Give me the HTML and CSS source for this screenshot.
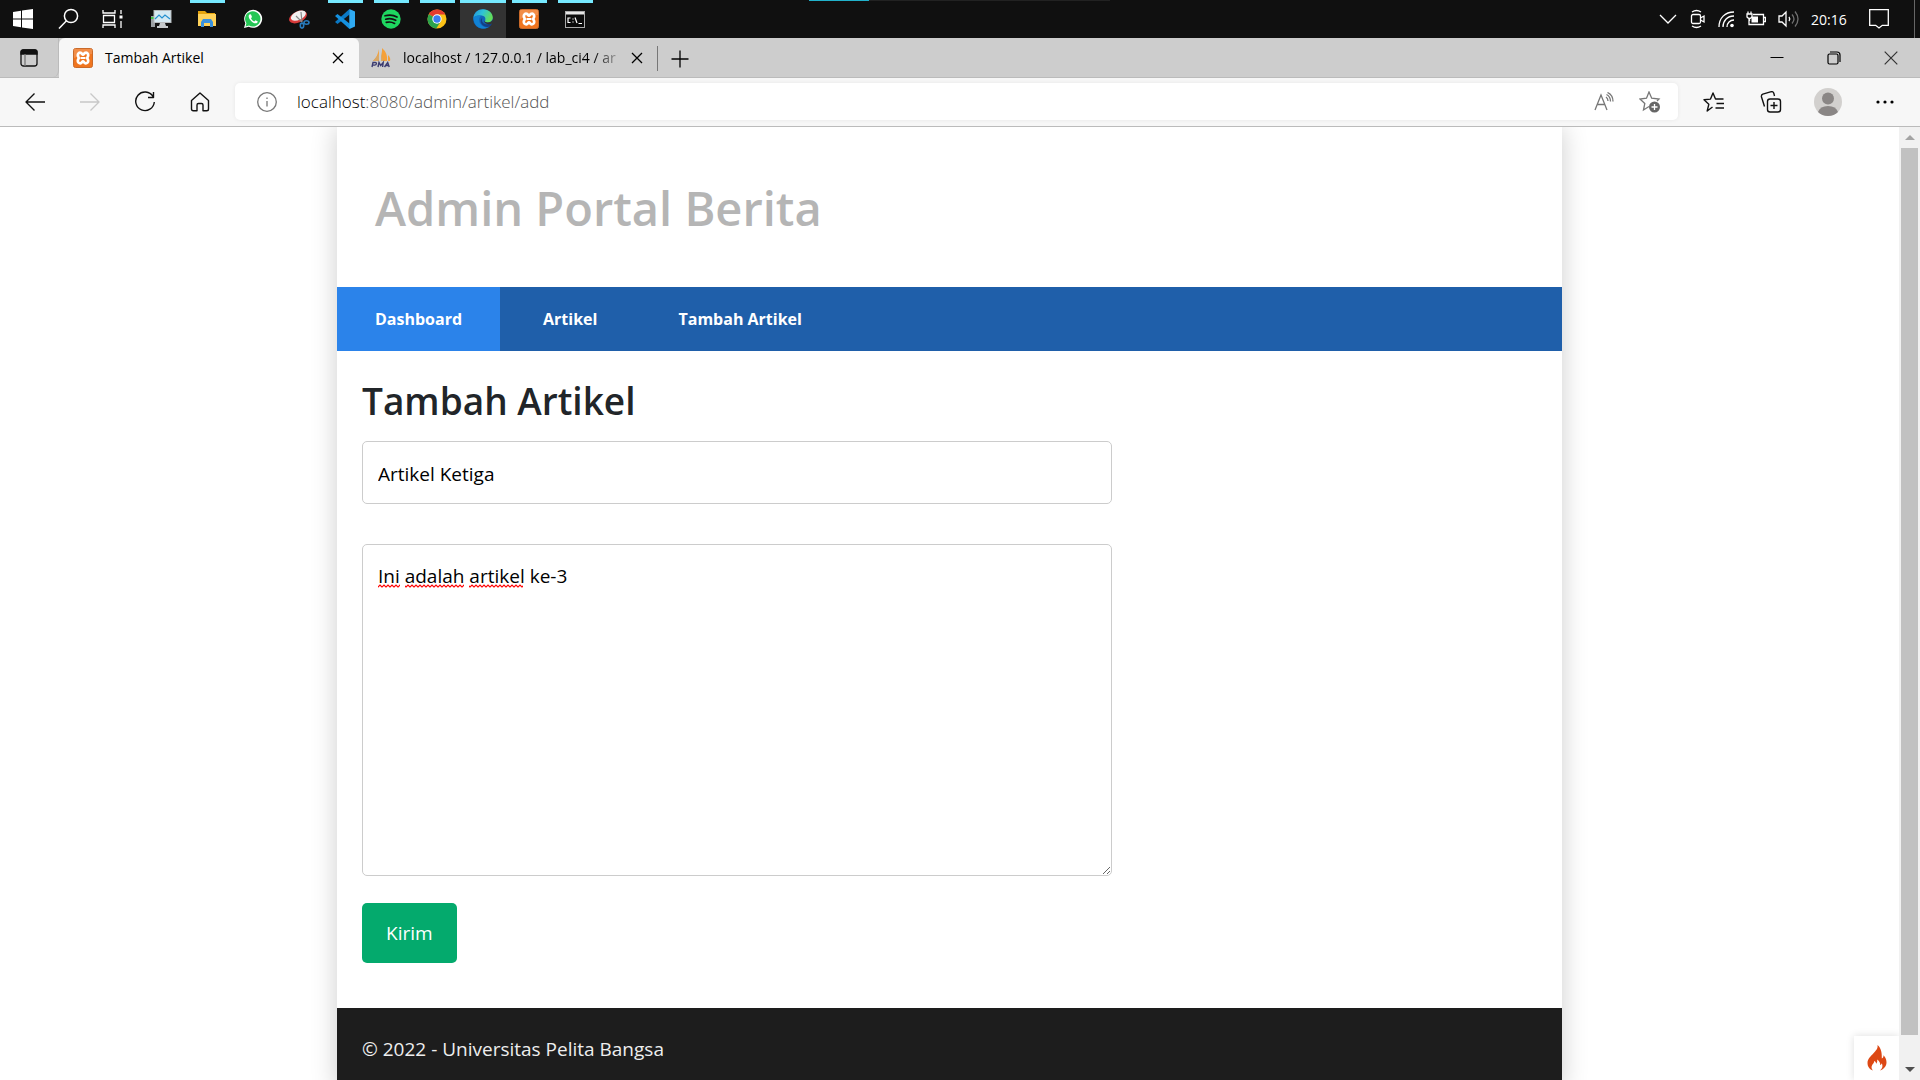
FILE: index.html
```html
<!DOCTYPE html>
<html lang="id">
<head>
<meta charset="utf-8">
<meta name="viewport" content="width=device-width, initial-scale=1">
<title>Tambah Artikel</title>
<link rel="stylesheet" href="styles.css">
</head>
<body>
<svg class="defs" aria-hidden="true">
  <symbol id="xampp" viewBox="0 0 20 20">
    <rect x=".5" y=".5" width="19" height="19" rx="2" fill="#f0751f" stroke="#c96a2a"/>
    <path d="M1 1h18v5Q10 6 1 10z" fill="#fff" opacity=".18"/>
    <path d="M7.300 4.700a2.400 2.400 0 0 0-2.500 2.500c0 1 .6 1.800 1.100 2.800-.5 1-1.100 1.800-1.100 2.800a2.400 2.400 0 0 0 2.500 2.500c1.500 0 1.800-2 2.700-2s1.200 2 2.700 2a2.400 2.400 0 0 0 2.500-2.500c0-1-.6-1.800-1.100-2.800.5-1 1.100-1.800 1.100-2.800a2.400 2.400 0 0 0-2.500-2.500c-1.500 0-1.800 2-2.700 2s-1.200-2-2.700-2z" fill="none" stroke="#fff" stroke-width="2.700" stroke-linejoin="round"/>
    <path d="M7.500 10h5" stroke="#fff" stroke-width="2"/>
  </symbol>
  <symbol id="close" viewBox="0 0 12 12"><path d="M1 1l10 10M11 1L1 11" stroke="currentColor" stroke-width="1.300" fill="none"/></symbol>
</svg>

<header class="taskbar">
  <nav class="apps" aria-label="Taskbar">
    <button class="app" aria-label="Start"><svg width="20" height="20" viewBox="0 0 20 20" fill="#fff"><path d="M0 3l8-1.200v7.700H0zM9 1.600L20 0v9.500H9zM0 10.500h8v7.700L0 17zM9 10.500h11V20L9 18.400z"/></svg></button>
    <button class="app" aria-label="Cari"><svg width="22" height="22" viewBox="0 0 22 22" fill="none" stroke="#fff" stroke-width="1.500"><circle cx="13" cy="8" r="6.600"/><path d="M8.500 12.800L1 20.500"/></svg></button>
    <button class="app" aria-label="Task View"><svg width="26" height="20" viewBox="0 0 26 20" fill="none" stroke="#fff" stroke-width="1.300"><path d="M1 1v3h12V1M1 19v-3h12v3M1.500 6.500h11v7h-11zM19 1v4M19 12v7"/><path d="M17.500 6.500h3v3h-3z" fill="#fff" stroke="none"/></svg></button>
    <button class="app" aria-label="Monitor"><svg width="22" height="18" viewBox="0 0 22 18"><path d="M1 6h4v11H1z" fill="#9a9fa3"/><path d="M1 7h3v2H1z" fill="#45c445"/><rect x="4" y=".5" width="17" height="12" fill="#d5e9f2" stroke="#b5b9bc"/><path d="M5 9l4-4 3 3 3-3 5 4" fill="none" stroke="#2490d0" stroke-width="1.200"/><path d="M10 13h5l1 3h2v2H7v-2h2z" fill="#c5c9cc"/></svg></button>
    <button class="app running" aria-label="File Explorer"><svg width="20" height="18" viewBox="0 0 20 18"><path d="M1 1h7l2 2h8v12H1z" fill="#e5a40e"/><path d="M1 4h18v12H1z" fill="#ffd25a"/><path d="M4 17v-5l2-3h8l2 3v5h-3v-4H7v4z" fill="#3a91dd"/></svg></button>
    <button class="app" aria-label="WhatsApp"><svg width="20" height="20" viewBox="0 0 20 20"><path d="M1 19l1.300-4.800A9 9 0 1 1 5.800 17.700z" fill="#fff"/><path d="M2.600 17.400l.8-3.200A7.700 7.700 0 1 1 6 16.600z" fill="#25c655"/><path d="M7 5.300c-.9.300-1.500 1.300-1.300 2.400.5 3 4 6.400 6.800 6.600 1 0 2.200-.7 2.300-1.900l-2.300-1.200-1.200 1.200c-1.500-.6-2.700-1.800-3.300-3.200L9 8 8 5.500z" fill="#fff"/></svg></button>
    <button class="app" aria-label="Snipping Tool"><svg width="22" height="20" viewBox="0 0 22 20"><ellipse cx="10" cy="8" rx="9.500" ry="5.500" transform="rotate(-25 10 8)" fill="#d73a3a"/><ellipse cx="10.500" cy="6.800" rx="8" ry="4.200" transform="rotate(-25 10 7)" fill="#f1eeee"/><path d="M8 7l6 6M13 3l1 10" stroke="#888" stroke-width="1.200"/><g fill="none" stroke="#287bbd" stroke-width="1.600"><ellipse cx="18.500" cy="13.500" rx="2.500" ry="1.700"/><ellipse cx="14" cy="16.600" rx="1.700" ry="2.500"/></g></svg></button>
    <button class="app running" aria-label="Visual Studio Code"><svg width="20" height="20" viewBox="0 0 20 20"><path d="M14.500 0L20 2.500v15L14.500 20z" fill="#2faaf2"/><path d="M14.500 0l1.300 4.500L2.500 15 0 13z" fill="#0a78c4"/><path d="M14.500 20l1.300-4.500L2.500 5 0 7z" fill="#1590df"/><path d="M14.500 0v20l1.500-3V3z" fill="#2faaf2"/></svg></button>
    <button class="app running" aria-label="Spotify"><svg width="20" height="20" viewBox="0 0 20 20"><circle cx="10" cy="10" r="9.700" fill="#1ed760"/><path d="M4 6.800c4-1.200 8.600-.8 12 1.200M4.700 10.200c3.500-1 7-.6 10 1.100M5.300 13.400c3-.8 5.800-.4 8.300 1" fill="none" stroke="#111" stroke-width="1.700" stroke-linecap="round"/></svg></button>
    <button class="app running" aria-label="Google Chrome"><svg width="20" height="20" viewBox="0 0 20 20"><circle cx="10" cy="10" r="9.500" fill="#fbc116"/><path d="M10 10L1.800 5.200A9.500 9.500 0 0 1 18.300 5.500H10z" fill="#e33b2e"/><path d="M10 10L1.800 5.200A9.500 9.500 0 0 0 9.200 19.500l4.700-7.200z" fill="#2ba24c"/><circle cx="10" cy="10" r="4.700" fill="#fff"/><circle cx="10" cy="10" r="3.700" fill="#3a7df0"/></svg></button>
    <button class="app running current" aria-label="Microsoft Edge"><svg width="20" height="20" viewBox="0 0 20 20"><defs><linearGradient id="eg" x1="0" y1="0" x2="1" y2=".4"><stop offset="0" stop-color="#1f8fe0"/><stop offset=".5" stop-color="#2fc3d6"/><stop offset="1" stop-color="#62de59"/></linearGradient></defs><circle cx="10" cy="10" r="9.800" fill="#1264b8"/><path d="M.3 9C1 3.500 5 .2 10 .2c5.700 0 9.800 3.900 9.800 8.300 0 3-2.300 4.900-5 4.900-2.300 0-3.300-.8-2.600-2 .8-2.600-.7-4.400-3.600-4.800C4.500 6 1.500 7 .3 9z" fill="url(#eg)"/><path d="M8.600 6.600C6 8 5 12 8 15.600c2 2.500 5.300 3.800 8.500 1.800C12 21.500 1.500 20.500.3 9 2 6.500 5.500 5.800 8.600 6.600z" fill="#1182d4"/><path d="M9.300 9c-1.800 4 2.200 8 8.700 5.600l1 .2-2 2.500c-3 1.400-6 .5-8-1.700-2-2.600-1.600-5.500.3-6.600z" fill="#123f86"/><path d="M12.200 11.400c-.7 1.200.3 2 2.600 2 2.200 0 4-1 5-3v3.800c-3.500 1.900-7.500 1-8.600-1.500z" fill="#333"/></svg></button>
    <button class="app running" aria-label="XAMPP"><svg width="20" height="20"><use href="#xampp"/></svg></button>
    <button class="app running" aria-label="Command Prompt"><svg width="20" height="17" viewBox="0 0 20 17"><rect x=".5" y=".5" width="19" height="16" fill="#0a0a0a" stroke="#aaa"/><path d="M1 1h18v2.500H1z" fill="#e5e5e5"/><path d="M5.500 7H3v4.500h2.500M8 7.500v1M8 10.500v1M10 6.500l2 5.500M13.500 12.500h3.500" stroke="#fff" fill="none" stroke-width="1.200"/></svg></button>
  </nav>
  <div class="load"></div>
  <div class="tray">
    <svg width="18" height="20" viewBox="0 0 18 20" class="ln"><path d="M1 6l8 8 8-8"/></svg>
    <svg width="16" height="20" viewBox="0 0 16 20" class="ln"><rect x="2.500" y="5.500" width="9" height="9" rx="1.500"/><path d="M11.500 9l3.500-2v6l-3.500-2M3 3q4.500-3 9 0M3 17q4.500 3 9 0"/></svg>
    <svg width="17" height="18" viewBox="0 0 17 18" class="ln"><path d="M2 17C2 8 8 2 17 2M6 17c0-6 4-11 11-11M10 17c0-4 3-7 7-7"/><circle cx="15" cy="15.500" r="1.800" fill="#fff" stroke="none"/></svg>
    <svg width="20" height="16" viewBox="0 0 20 16" class="ln"><path d="M3 8v5.500h14.500v-10H7M18 6.500h1.500v4H18M1 3h5v3q-2.500 3-5 0zM2 3V.5M5 3V.5M3.500 7v3"/><path d="M5.500 5.500h6.500v6H5.500z" fill="#fff" stroke="none"/></svg>
    <svg width="21" height="18" viewBox="0 0 21 18" class="ln"><path d="M1 6h3l4-4v14l-4-4H1z"/><path d="M11 7q1.500 2 0 4"/><path d="M14 4.500q4 4.500 0 9M17 1.500q6 7.500 0 15" opacity=".4"/></svg>
    <time class="clock">20:16</time>
    <svg width="20" height="20" viewBox="0 0 20 20" class="ln"><path d="M.7.7h18.600v15.600h-6L10 19l-3.300-2.700h-6z"/></svg>
    <span class="desk"></span>
  </div>
</header>

<div class="tabs">
  <button class="tabmenu" aria-label="Tab actions"><svg width="18" height="18" viewBox="0 0 18 18" fill="none" stroke="#111" stroke-width="1.300"><rect x="1" y="1" width="16" height="16" rx="2.500"/><path d="M1 5h16V3q0-2-2-2H3Q1 1 1 3z" fill="#111"/><path d="M5 5v12" stroke="#777"/></svg></button>
  <div class="tab on">
    <svg width="20" height="20"><use href="#xampp"/></svg>
    <span class="tabname">Tambah Artikel</span>
    <button class="x" aria-label="Tutup tab"><svg width="12" height="12"><use href="#close"/></svg></button>
  </div>
  <div class="tab">
    <svg width="20" height="20" viewBox="0 0 20 20"><path d="M8 1v12H2Q7 8 8 1zM11 0q6 5 5 13h-5zM17 7q3 3 2 6h-2z" fill="#f5a13a"/><path d="M2 13h6V6zM10 3v10h2z" fill="#d9a866"/><path d="M1 19l1-4.500h2.200q1.500.1 1.200 1.300-.3 1.300-1.700 1.300H1.800M7 19l1-4.500 1.700 3 2.500-3L11.600 19M13.500 19l3.200-4.500 1.500 4.500M14.700 17.500h3" fill="none" stroke="#3b3b70" stroke-width="1.400"/></svg>
    <span class="tabname fade">localhost / 127.0.0.1 / lab_ci4 / ar</span>
    <button class="x" aria-label="Tutup tab"><svg width="12" height="12"><use href="#close"/></svg></button>
  </div>
  <button class="newtab" aria-label="Tab baru"><svg width="18" height="18" viewBox="0 0 18 18" stroke="#000" stroke-width="1.300"><path d="M9 .5v17M.5 9h17"/></svg></button>
  <div class="wins">
    <button aria-label="Minimize"><svg width="14" height="14" viewBox="0 0 14 14" stroke="#000"><path d="M.5 6.500h13"/></svg></button>
    <button aria-label="Restore"><svg width="14" height="14" viewBox="0 0 14 14" fill="none" stroke="#000" stroke-width="1.200"><rect x="1" y="3" width="10" height="10" rx="1.500"/><path d="M3 1h7q3 0 3 3v7"/></svg></button>
    <button aria-label="Close"><svg width="14" height="14" viewBox="0 0 14 14" stroke="#333" stroke-width="1.200"><path d="M.7.7l12.600 12.600M13.300.7L.7 13.300"/></svg></button>
  </div>
</div>

<div class="toolbar">
  <button class="tool" aria-label="Kembali"><svg width="22" height="20" viewBox="0 0 22 20" class="dk"><path d="M21 10H2M10.500 1.500L2 10l8.500 8.500"/></svg></button>
  <button class="tool off" aria-label="Maju"><svg width="22" height="20" viewBox="0 0 22 20" class="dk"><path d="M1 10h19M11.500 1.500L20 10l-8.500 8.500"/></svg></button>
  <button class="tool" aria-label="Muat ulang"><svg width="22" height="22" viewBox="0 0 22 22" class="dk"><path d="M19 5.500A9.300 9.300 0 1 0 20.300 11M19.500 1v5.500H14"/></svg></button>
  <button class="tool" aria-label="Beranda"><svg width="20" height="20" viewBox="0 0 20 20" class="dk"><path d="M1.500 8.500L10 1l8.500 7.500V17q0 1.800-1.800 1.800H13V13q0-1.500-1.500-1.500h-3Q7 11.500 7 13v5.800H3.300q-1.800 0-1.800-1.800z"/></svg></button>
  <div class="address">
    <svg width="20" height="20" viewBox="0 0 20 20" class="gr"><circle cx="10" cy="10" r="9.300"/><path d="M10 9v5.500M10 5.500V7"/></svg>
    <a class="url" href="#"><b>localhost</b>:8080/admin/artikel/add</a>
    <button class="in" aria-label="Baca nyaring"><svg width="20" height="20" viewBox="0 0 20 20" class="gr"><path d="M1 18L7 3l6 15M3.200 12.500h7.600M12 5q2 1.500 2 4M12.500 2.500q4 2 4 7M13.500.5q5.500 2.500 5.500 9"/></svg></button>
    <button class="in" aria-label="Tambah favorit"><svg width="22" height="22" viewBox="0 0 22 22" class="gr"><path d="M10 15.500L4.500 19l1.300-6.500L1 8l6.500-.8L10 1l2.700 6.200L20 8l-2 2"/><circle cx="15.500" cy="16" r="5.500" fill="#666" stroke="none"/><path d="M15.500 13v6M12.500 16h6" stroke="#fff"/></svg></button>
  </div>
  <div class="actions">
    <button class="tool" aria-label="Favorit"><svg width="22" height="20" viewBox="0 0 22 20" class="dk"><path d="M9.500 15L4.200 19l1.600-6.700L1 7.700l6.500-.6L10 1l2.500 6h8M13.500 11.500H21M12.500 16H21"/></svg></button>
    <button class="tool" aria-label="Koleksi"><svg width="22" height="22" viewBox="0 0 22 22" class="dk"><rect x="7.500" y="8" width="13" height="13" rx="2.500"/><path d="M14 11v7M10.500 14.500h7M4.500 15.500L1.500 6q-.5-2 1.300-2.800l8.500-2.500q2-.3 2.500 1.500L14.500 5"/></svg></button>
    <button class="tool" aria-label="Profil"><svg width="28" height="28" viewBox="0 0 28 28"><circle cx="14" cy="14" r="14" fill="#d2d0ce"/><circle cx="14" cy="10.500" r="6" fill="#8a8685"/><path d="M4 24q2-6 10-6t10 6q-4 4-10 4T4 24z" fill="#8a8685"/></svg></button>
    <button class="tool" aria-label="Lainnya"><svg width="18" height="4" viewBox="0 0 18 4"><circle cx="2" cy="2" r="1.600"/><circle cx="9" cy="2" r="1.600"/><circle cx="16" cy="2" r="1.600"/></svg></button>
  </div>
</div>

<div class="view">
  <div class="page">
    <div class="container">
      <header class="brand"><h1>Admin Portal Berita</h1></header>
      <nav class="menu">
        <a class="active" href="#">Dashboard</a>
        <a href="#">Artikel</a>
        <a href="#">Tambah Artikel</a>
      </nav>
      <main class="main">
        <h2>Tambah Artikel</h2>
        <form class="form">
          <input type="text" name="judul" aria-label="Judul" value="Artikel Ketiga">
          <div class="editor">
            <textarea name="isi" aria-label="Isi" spellcheck="false">Ini adalah artikel ke-3</textarea>
            <svg class="spell" width="150" height="4" aria-hidden="true">
              <defs><pattern id="sq" width="4" height="4" patternUnits="userSpaceOnUse"><path d="M-1 3.500L0 3l2-2 2 2 1 .5" fill="none" stroke="#f00" stroke-width="1.200"/></pattern></defs>
              <path d="M0 0h22v4H0zM27 0h59v4H27zM91 0h54v4H91z" fill="url(#sq)"/>
            </svg>
          </div>
          <button class="send" type="button">Kirim</button>
        </form>
      </main>
      <footer class="foot">© 2022 - Universitas Pelita Bangsa</footer>
    </div>
    <button class="debug" aria-label="CodeIgniter"><svg width="20" height="26" viewBox="0 0 20 26"><path d="M10.500 0c.6 3.500-1.500 5.500-4 8.300C3.500 11.500.5 14 .5 18c0 3.800 2.300 6.500 5.500 7.500-1.500-1.500-2-3.500-.8-5.500.8-1.400 2-2.200 2-4 1.300.5 1.900 1.500 1.900 2.800 1-.9 1.400-2.300 1-4.300 2.500 1.500 3.300 3.700 3 5.500 1-.2 1.500-.8 1.600-1.700 1.600 3 .4 5.700-1.700 7.200 4-1.500 6.500-4.500 6.500-8.300 0-3.200-1.700-5.500-3-7 .1 1.800-.6 2.800-1.700 3.300C15 9 14.500 3 10.500 0z" fill="#dd4814"/></svg></button>
  </div>
  <div class="scroll" aria-hidden="true">
    <svg width="10" height="5" viewBox="0 0 10 5"><path d="M0 5l5-5 5 5z" fill="#a3a3a3"/></svg>
    <span class="thumb"></span>
    <svg width="10" height="5" viewBox="0 0 10 5"><path d="M0 0l5 5 5-5z" fill="#505050"/></svg>
  </div>
</div>
</body>
</html>
```
FILE: styles.css
```css
* { box-sizing: border-box; }
body {
  margin: 0;
  height: 100vh;
  display: flex;
  flex-direction: column;
  overflow: hidden;
  background: #fff;
  font-family: "Open Sans", "Noto Sans", sans-serif;
  font-size: 19px;
  color: #212529;
}
button { border: 0; padding: 0; background: none; font: inherit; color: inherit; display: flex; align-items: center; justify-content: center; }
a { text-decoration: none; color: inherit; }
svg { flex: none; display: block; }
.defs { position: absolute; width: 0; height: 0; }

/* Windows taskbar */
.taskbar { flex: none; height: 38px; display: flex; background: #101010; color: #fff; }
.apps { display: flex; }
.app { width: 46px; background: linear-gradient(#76e9ff, #76e9ff) center top / 0 3px no-repeat; }
.running { background-size: 35px 3px; }
.current { background-size: 46px 3px; background-color: #333; }
.load { width: 301px; height: 1px; margin-left: 211px; background: linear-gradient(90deg, #21b1cb 60px, #222 60px); }
.tray { margin-left: auto; display: flex; align-items: center; gap: 12px; }
.ln { fill: none; stroke: #fff; stroke-width: 1.3px; }
.clock { width: 36px; font-size: 14px; }
.tray .clock + svg { margin-left: 10px; }
.desk { width: 6px; height: 38px; margin-left: 13px; border-left: 1px solid #666; }

/* Browser tabs */
.tabs { flex: none; height: 40px; display: flex; background: #cdcdcd; border-bottom: 1px solid #bbb; color: #000; font-size: 14px; }
.tabmenu { width: 59px; border-right: 1px solid #bbb; border-bottom-right-radius: 6px; }
.tab { width: 298px; display: flex; align-items: center; padding: 0 14px 0 12px; gap: 12px; }
.tab.on { width: 300px; margin-bottom: -1px; padding: 0 15px 1px 14px; background: #f7f7f7; border-radius: 6px 6px 0 0; }
.tabname { flex: 1; white-space: nowrap; }
.fade { -webkit-mask-image: linear-gradient(90deg, #000 190px, transparent 222px); mask-image: linear-gradient(90deg, #000 190px, transparent 222px); }
.newtab { width: 44px; height: 25px; margin-top: 8px; border-left: 1px solid #777; }
.wins { margin: 0 1px 0 auto; display: flex; }
.wins button { width: 57px; }

/* Browser toolbar */
.toolbar { flex: none; height: 49px; display: flex; align-items: center; padding: 0 8px 1px 7px; background: #f7f7f7; border-bottom: 1px solid #bbb; }
.tool { width: 55px; height: 37px; }
.dk { fill: none; stroke: #111; stroke-width: 1.4px; stroke-linejoin: round; }
.off { opacity: .2; }
.address { flex: 1; height: 37px; margin: 0 8px; padding: 0 16px 0 22px; display: flex; align-items: center; background: #fff; border-radius: 5px; box-shadow: 0 0 4px #0001; }
.gr { fill: none; stroke: #777; stroke-width: 1.3px; }
.url { flex: 1; margin-left: 20px; font-size: 17px; font-weight: 300; color: #555; }
.url b { font-weight: 300; color: #000; }
.in { width: 24px; margin-left: 22px; }
.actions { display: flex; gap: 2px; }

/* Page */
.view { flex: 1; min-height: 0; display: flex; }
.page { flex: 1; min-width: 0; position: relative; overflow: hidden; }
.container { max-width: 1225px; margin: 0 auto; background: #fff; box-shadow: 0 0 25px #0003; }
.brand { padding: 51px 38px 49px; }
.brand h1 { margin: 0; font-size: 47px; line-height: 60px; font-weight: 600; color: #b5b5b5; }
.menu { display: flex; gap: 5px; background: #1f5faa; color: #fff; font-size: 16px; font-weight: 700; }
.menu a { padding: 0 38px; line-height: 64px; }
.menu .active { background: #2b83ea; }
.main { padding: 26px 25px 45px; }
.main h2 { margin: 0 0 16px; font-size: 37px; line-height: 48px; font-weight: 600; }
.form { display: flex; flex-direction: column; align-items: flex-start; }
.form input, .form textarea { display: block; width: 100%; border: 1px solid #ccc; border-radius: 5px; padding: 16px 15px 14px; font: inherit; line-height: 30px; color: #000; background: #fff; outline: 0; }
.form input { max-width: 750px; height: 63px; margin-bottom: 40px; }
.form textarea { height: 332px; resize: both; }
.editor { position: relative; width: 100%; max-width: 750px; margin-bottom: 27px; }
.spell { position: absolute; left: 16px; top: 40px; pointer-events: none; }
.send { height: 60px; padding: 0 24px; border-radius: 5px; background: #04aa6d; color: #fff; }
.foot { padding: 25px; line-height: 32px; background: #1d1d1d; color: #eee; }
.debug { position: absolute; right: 0; bottom: 0; width: 45px; height: 44px; background: #fff; box-shadow: 0 0 8px #0002; }
.scroll { width: 21px; display: flex; flex-direction: column; align-items: center; gap: 8px; padding: 8px 0; background: #f1f1f1; }
.thumb { flex: 1; width: 17px; margin-bottom: 24px; background: #c1c1c1; }
```
